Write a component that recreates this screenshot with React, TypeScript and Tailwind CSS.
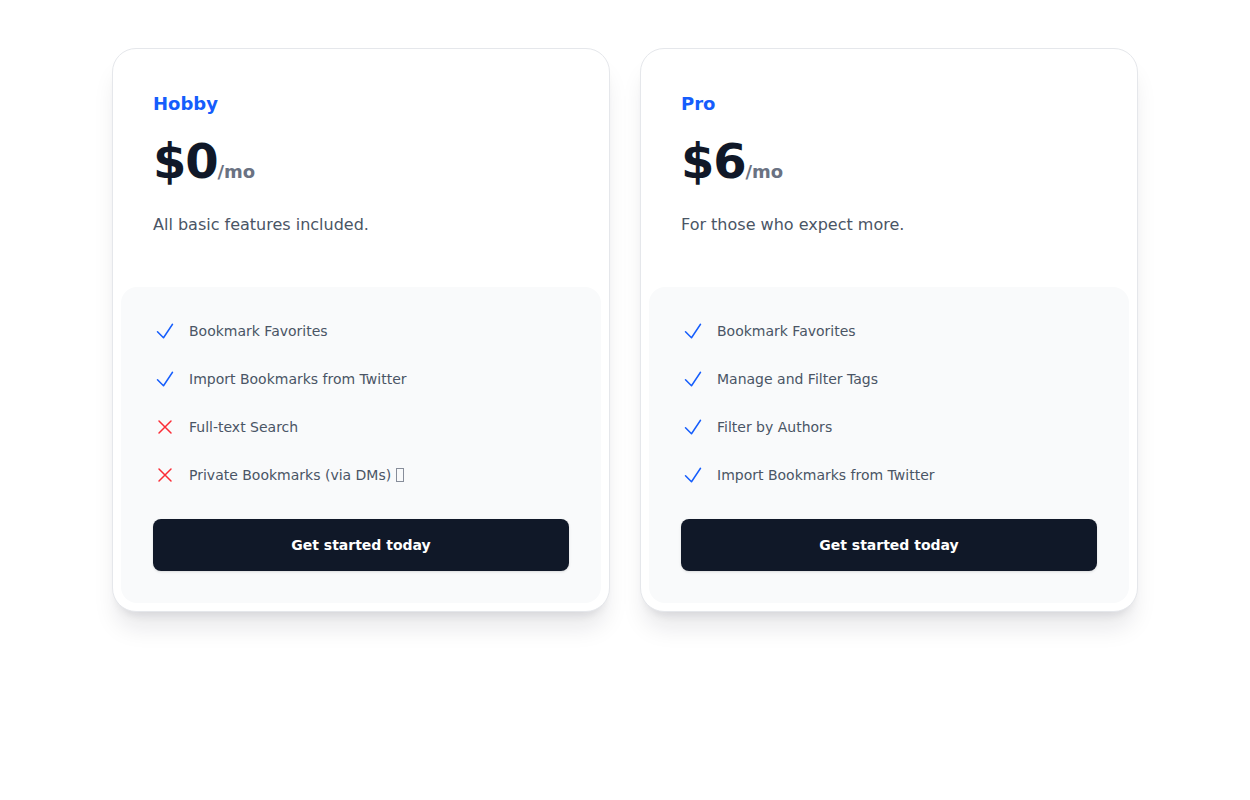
import type { ReactNode } from 'react';

type Feature = { label: ReactNode; included: boolean };

type Plan = {
  name: string;
  price: string;
  blurb: string;
  features: Feature[];
};

// the lock emoji shows up as a missing-glyph box in the screenshot
const Tofu = () => (
  <span className="ml-[5px] inline-block h-[14px] w-[8px] translate-y-[2px] border border-gray-500/80" />
);

const plans: Plan[] = [
  {
    name: 'Hobby',
    price: '$0',
    blurb: 'All basic features included.',
    features: [
      { label: 'Bookmark Favorites', included: true },
      { label: 'Import Bookmarks from Twitter', included: true },
      { label: 'Full-text Search', included: false },
      {
        label: (
          <>
            Private Bookmarks (via DMs)
            <Tofu />
          </>
        ),
        included: false,
      },
    ],
  },
  {
    name: 'Pro',
    price: '$6',
    blurb: 'For those who expect more.',
    features: [
      { label: 'Bookmark Favorites', included: true },
      { label: 'Manage and Filter Tags', included: true },
      { label: 'Filter by Authors', included: true },
      { label: 'Import Bookmarks from Twitter', included: true },
    ],
  },
];

function CheckIcon() {
  return (
    <svg viewBox="0 0 24 24" fill="none" stroke="currentColor" strokeWidth={1.5} className="h-6 w-6 shrink-0 text-blue-600">
      <path strokeLinecap="round" strokeLinejoin="round" d="m4.5 12.75 6 6 9-13.5" />
    </svg>
  );
}

function XIcon() {
  return (
    <svg viewBox="0 0 24 24" fill="none" stroke="currentColor" strokeWidth={1.5} className="h-6 w-6 shrink-0 text-red-500">
      <path strokeLinecap="round" strokeLinejoin="round" d="M6 18 18 6M6 6l12 12" />
    </svg>
  );
}

function PlanCard({ plan }: { plan: Plan }) {
  return (
    <div className="rounded-3xl border border-gray-200 bg-white p-2 shadow-xl shadow-gray-900/10">
      <div className="px-8 pt-[33px] pb-[50px]">
        <h3 className="text-lg font-semibold text-blue-600">{plan.name}</h3>
        <p className="mt-[19px] flex items-baseline">
          <span className="text-5xl leading-none font-bold tracking-tight text-gray-900">{plan.price}</span>
          <span className="text-lg font-semibold text-gray-500">/mo</span>
        </p>
        <p className="mt-[27px] text-base text-gray-600">{plan.blurb}</p>
      </div>
      <div className="rounded-2xl bg-gray-50 p-8">
        <ul className="space-y-6">
          {plan.features.map((f, i) => (
            <li key={i} className="flex items-center gap-3 text-sm leading-6 text-gray-600">
              {f.included ? <CheckIcon /> : <XIcon />}
              <span>{f.label}</span>
            </li>
          ))}
        </ul>
        <button className="mt-8 block w-full rounded-lg bg-gray-900 py-4 text-center text-sm font-semibold text-white shadow-sm">
          Get started today
        </button>
      </div>
    </div>
  );
}

export default function App() {
  return (
    <div className="min-h-screen bg-white font-['DejaVu_Sans',sans-serif]">
      <div className="mx-auto grid max-w-[1026px] grid-cols-2 gap-[30px] pt-12">
        {plans.map((p) => (
          <PlanCard key={p.name} plan={p} />
        ))}
      </div>
    </div>
  );
}
